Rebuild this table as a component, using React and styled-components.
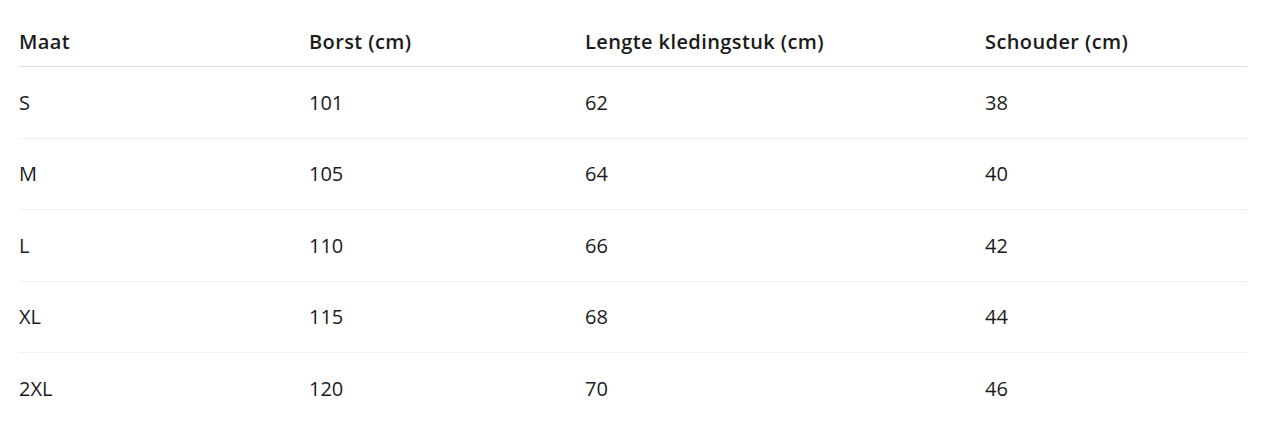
import styled, { createGlobalStyle } from 'styled-components'

const GlobalStyle = createGlobalStyle`
  body {
    margin: 0;
    background: #fff;
    font-family: "Open Sans", "Noto Sans", sans-serif;
    color: #1b1b1b;
  }
`

const Wrapper = styled.div`
  padding: 16px 17px 0 19px;
`

const Table = styled.table`
  width: 1228px;
  border-collapse: collapse;
  table-layout: fixed;
  font-size: 20px;
`

const HeadCell = styled.th`
  height: 50px;
  padding: 0;
  text-align: left;
  font-weight: 600;
  letter-spacing: 0.4px;
  vertical-align: middle;
  border-bottom: 1px solid #dcdcdc;
`

const Row = styled.tr`
  &:not(:last-child) td {
    border-bottom: 1px solid #efefef;
  }
`

const Cell = styled.td`
  height: 70.5px;
  padding: 0;
  vertical-align: middle;
  font-weight: 400;
`

const columns = [
  { label: 'Maat', width: 290 },
  { label: 'Borst (cm)', width: 276 },
  { label: 'Lengte kledingstuk (cm)', width: 400 },
  { label: 'Schouder (cm)', width: 262 }
]

const sizes = [
  ['S', 101, 62, 38],
  ['M', 105, 64, 40],
  ['L', 110, 66, 42],
  ['XL', 115, 68, 44],
  ['2XL', 120, 70, 46]
]

const App = () => {
  return (
    <>
      <GlobalStyle />
      <Wrapper>
        <Table>
          <colgroup>
            {columns.map(c => <col key={c.label} style={{ width: c.width }} />)}
          </colgroup>
          <thead>
            <tr>
              {columns.map(c => <HeadCell key={c.label}>{c.label}</HeadCell>)}
            </tr>
          </thead>
          <tbody>
            {sizes.map(row => (
              <Row key={row[0]}>
                {row.map((value, i) => <Cell key={i}>{value}</Cell>)}
              </Row>
            ))}
          </tbody>
        </Table>
      </Wrapper>
    </>
  )
}

export default App
